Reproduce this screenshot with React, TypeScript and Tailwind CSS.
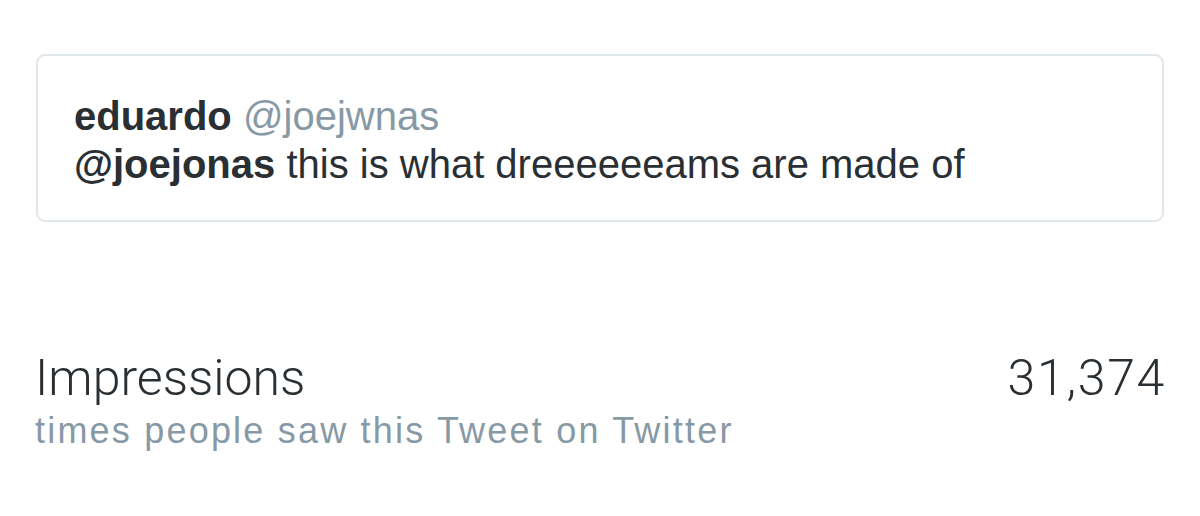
import React from 'react';

export default function App() {
  return (
    <div className="w-[1200px] h-[516px] bg-white px-[36px] pt-[54px] font-['Liberation_Sans',Arial,sans-serif]">
      {/* Quoted tweet card */}
      <div className="h-[168px] rounded-[9px] border-2 border-[#e1e8ed] pl-[36px] pt-[36px]">
        <div className="text-[40px] leading-[48px] text-[#292f33]">
          <span className="font-bold">eduardo</span>{' '}
          <span className="text-[#8899a6]">@joejwnas</span>
        </div>
        <div className="text-[40px] leading-[48px] text-[#292f33]">
          <span className="font-bold">@joejonas</span> this is what dreeeeeeams are made of
        </div>
      </div>

      {/* Impressions row */}
      <div className="mt-[127px] -ml-[1px] -mr-[2px] flex items-start justify-between">
        <div>
          <div className="font-['Roboto',sans-serif] text-[50px] leading-[58px] font-light text-[#292f33]">Impressions</div>
          <div className="text-[36px] leading-[48px] tracking-[2.2px] text-[#8899a6]">times people saw this Tweet on Twitter</div>
        </div>
        <div className="font-['Roboto',sans-serif] text-[50px] leading-[58px] font-light tracking-[1.7px] text-[#292f33]">31,374</div>
      </div>
    </div>
  );
}
